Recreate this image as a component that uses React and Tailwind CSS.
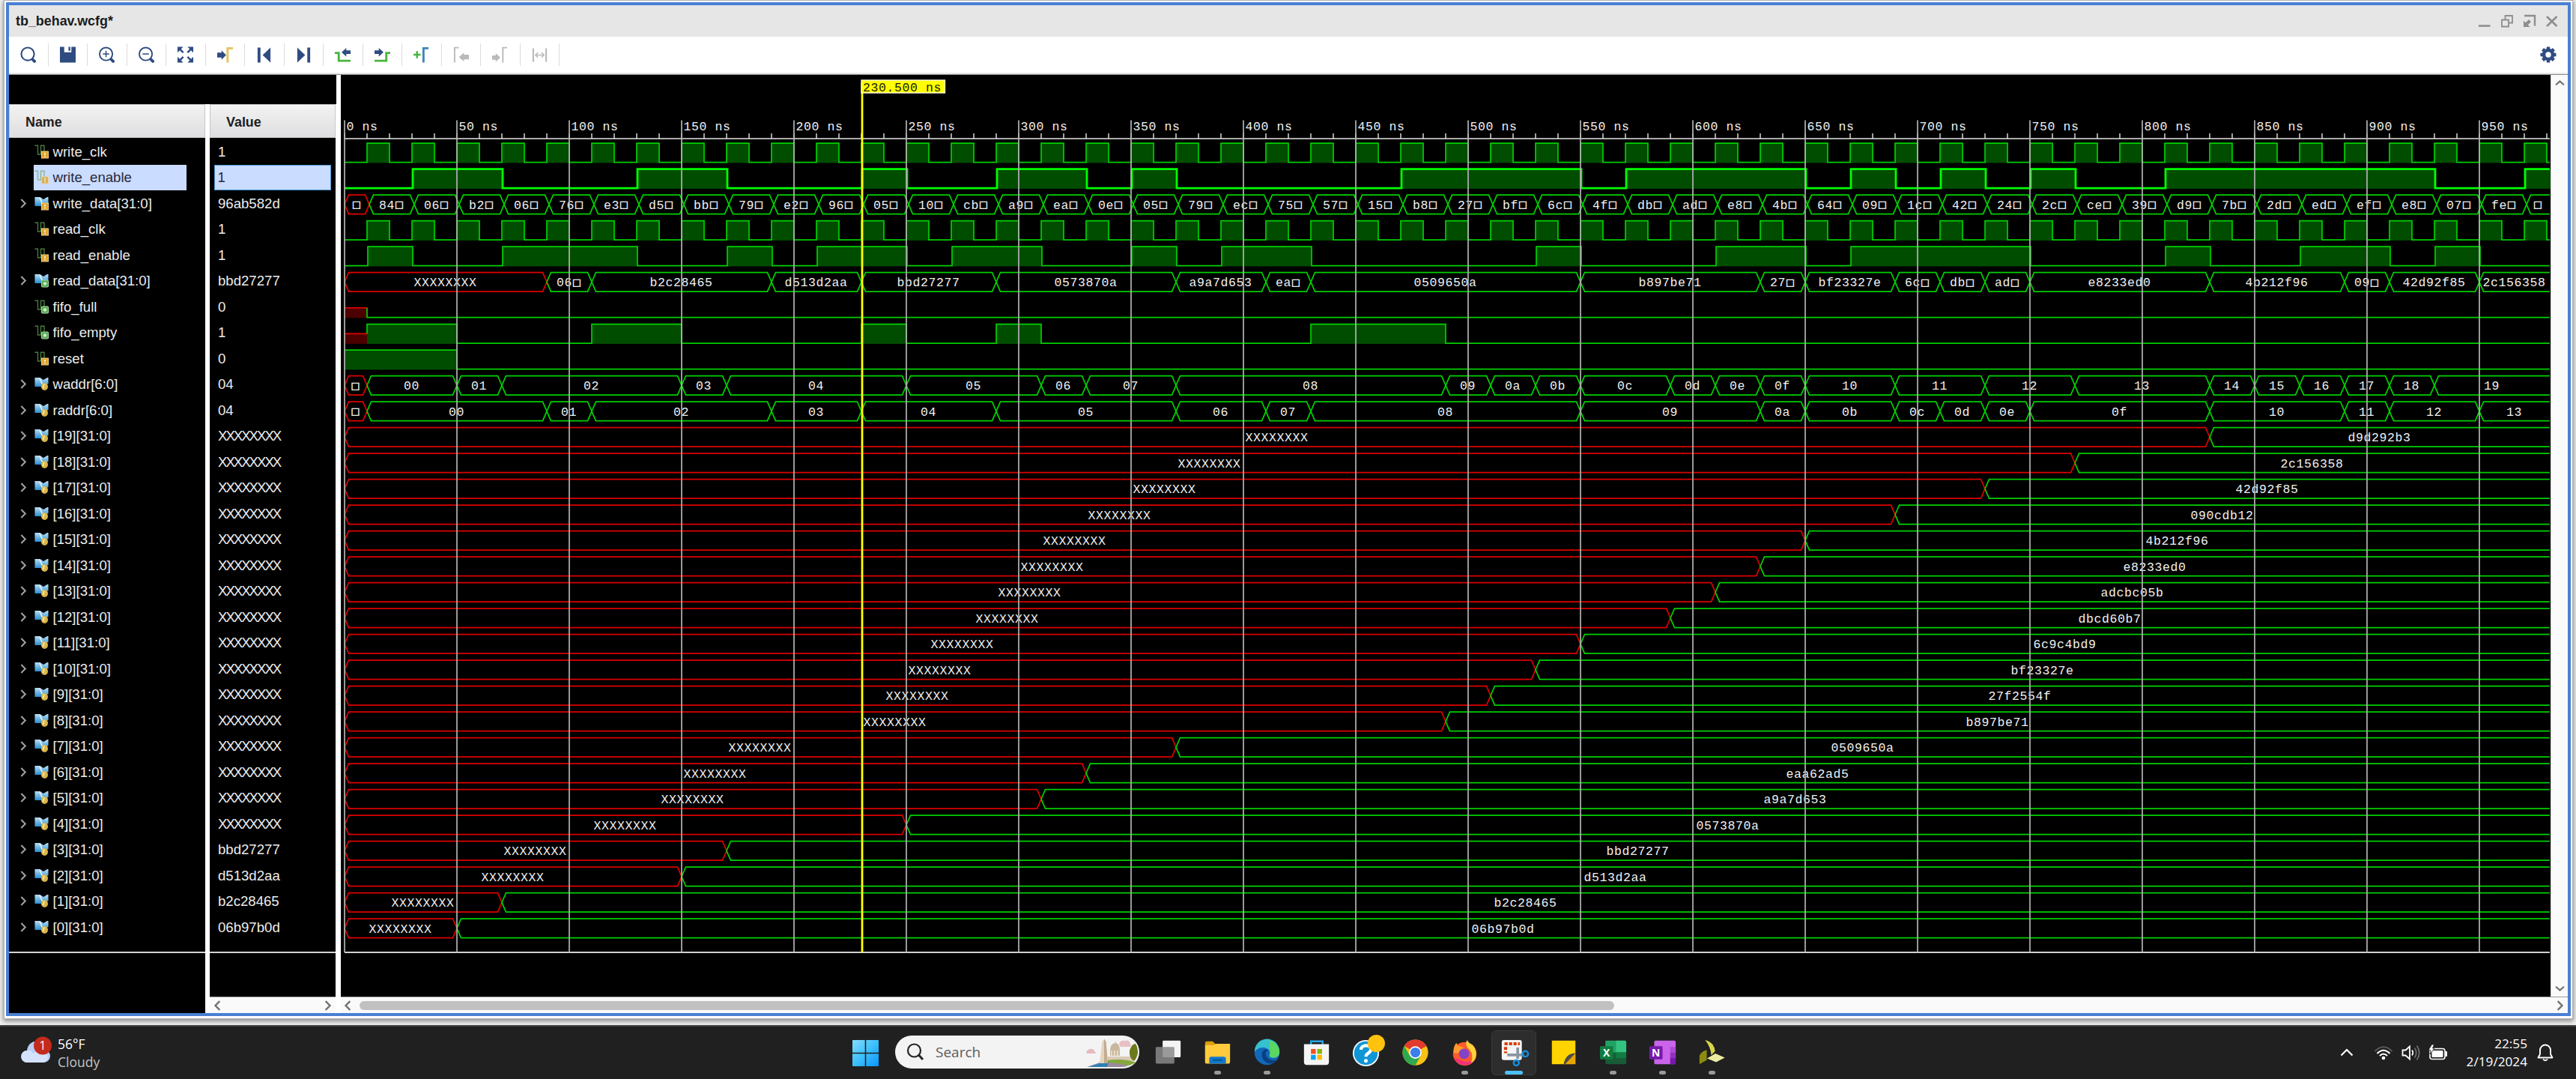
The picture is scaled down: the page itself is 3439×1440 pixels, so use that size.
import React from "react";

const END = 981.3;
const X = (t) => 460 + 3 * Math.min(t, END);
const rowTop = (i) => 191.2 + 34.5 * i;
const GREEN = "#00d000";
const RED = "#dc0000";

// Each bus is a list of [start time, label, unknown?].
const hex = (s) => s.split(" ").map((p) => p.split(":")).map(([t, v]) => [Number(t), v]);

const WRITE_DATA = [
  [0, "□", true],
  ..."84 06 b2 06 76 e3 d5 bb 79 e2 96 05 10 cb a9 ea 0e 05 79 ec 75 57 15 b8 27 bf 6c 4f db ad e8 4b 64 09 1c 42 24 2c ce 39 d9 7b 2d ed ef e8 07 fe"
    .split(" ")
    .map((v, k) => [11 + 20 * k, v + "□"]),
  [971, "□"],
];
const READ_DATA = [
  [0, "XXXXXXXX", true],
  ...hex(
    "90:06□ 110:b2c28465 190:d513d2aa 230:bbd27277 290:0573870a 370:a9a7d653 410:ea□ 430:0509650a 550:b897be71 630:27□ 650:bf23327e 690:6c□ 710:db□ 730:ad□ 750:e8233ed0 830:4b212f96 890:09□ 910:42d92f85 950:2c156358"
  ),
];
const WADDR = [
  [0, "□", true],
  ...hex(
    "10:00 50:01 70:02 150:03 170:04 250:05 310:06 330:07 370:08 490:09 510:0a 530:0b 550:0c 590:0d 610:0e 630:0f 650:10 690:11 730:12 770:13 830:14 850:15 870:16 890:17 910:18 930:19"
  ),
];
const RADDR = [
  [0, "□", true],
  ...hex(
    "10:00 90:01 110:02 190:03 230:04 290:05 370:06 410:07 430:08 550:09 630:0a 650:0b 690:0c 710:0d 730:0e 750:0f 830:10 890:11 910:12 950:13"
  ),
];

const CLK = Array.from({ length: 49 }, (_, k) => [10 + 20 * k, 20 + 20 * k]);

const MEM = [
  [19, 830, "d9d292b3"], [18, 770, "2c156358"], [17, 730, "42d92f85"], [16, 690, "090cdb12"],
  [15, 650, "4b212f96"], [14, 630, "e8233ed0"], [13, 610, "adcbc05b"], [12, 590, "dbcd60b7"],
  [11, 550, "6c9c4bd9"], [10, 530, "bf23327e"], [9, 510, "27f2554f"], [8, 490, "b897be71"],
  [7, 370, "0509650a"], [6, 330, "eaa62ad5"], [5, 310, "a9a7d653"], [4, 250, "0573870a"],
  [3, 170, "bbd27277"], [2, 150, "d513d2aa"], [1, 70, "b2c28465"], [0, 50, "06b97b0d"],
];

const SIGNALS = [
  { name: "write_clk", value: "1", kind: "bit", badge: "in", high: CLK },
  {
    name: "write_enable", value: "1", kind: "bit", badge: "in", selected: true, shift: 1,
    high: [[30, 70], [130, 170], [230, 250], [290, 330], [350, 370], [470, 550], [570, 650], [670, 690], [710, 730], [750, 770], [810, 930], [970, 990]],
  },
  { name: "write_data[31:0]", value: "96ab582d", kind: "bus", badge: "in", segs: WRITE_DATA },
  { name: "read_clk", value: "1", kind: "bit", badge: "in", high: CLK },
  {
    name: "read_enable", value: "1", kind: "bit", badge: "in", shift: 1,
    high: [[10, 30], [70, 130], [170, 190], [210, 250], [270, 310], [350, 370], [390, 430], [530, 550], [610, 650], [670, 750], [810, 830], [870, 910], [930, 950]],
  },
  { name: "read_data[31:0]", value: "bbd27277", kind: "bus", badge: "out", segs: READ_DATA },
  { name: "fifo_full", value: "0", kind: "bit", badge: "out", unknown: 10, high: [] },
  { name: "fifo_empty", value: "1", kind: "bit", badge: "out", unknown: 10, high: [[10, 50], [110, 150], [230, 250], [290, 310], [430, 490]] },
  { name: "reset", value: "0", kind: "bit", badge: "in", high: [[0, 50]] },
  { name: "waddr[6:0]", value: "04", kind: "bus", badge: "lock", segs: WADDR },
  { name: "raddr[6:0]", value: "04", kind: "bus", badge: "lock", segs: RADDR },
  ...MEM.map(([n, t, v]) => ({
    name: `[${n}][31:0]`,
    value: t < 230 ? v : "XXXXXXXX",
    kind: "bus",
    badge: "lock",
    segs: [[0, "XXXXXXXX", true], [t, v]],
  })),
];

function BitWave({ sig, i }) {
  const top = rowTop(i);
  const bot = top + 25.4;
  const mid = top + 12.6;
  const dx = sig.shift || 0;
  const start = sig.unknown || 0;
  let d = "";
  let cur = X(start);
  if (sig.unknown) {
    const firstHigh = sig.high.length && sig.high[0][0] === start;
    d += `M${cur} ${mid}V${firstHigh ? top : bot}`;
  } else d += `M${cur} ${sig.high[0] && sig.high[0][0] === 0 ? top : bot}`;
  sig.high.forEach(([a, b]) => {
    if (a > start) d += `H${X(a) + dx}V${top}`;
    d += b >= END ? `H${X(b)}` : `H${X(b) + dx}V${bot}`;
    cur = b;
  });
  if (cur < END || !sig.high.length) d += `H${X(END)}`;
  return (
    <g>
      {sig.unknown && (
        <>
          <rect x={X(0)} y={mid} width={30} height={bot - mid + 0.8} fill="#4d0000" />
          <path d={`M${X(0)} ${mid}H${X(10)}`} stroke={RED} strokeWidth="1.8" />
        </>
      )}
      {sig.high.map(([a, b]) => (
        <rect key={a} x={X(a) + dx} y={top} width={X(b) - X(a)} height={bot - top + 0.8} fill="#004d00" />
      ))}
      <path d={d} fill="none" stroke={sig.selected ? "#00ff00" : GREEN} strokeWidth={sig.selected ? 2.8 : 1.7} />
    </g>
  );
}

// Truncated labels end in a hollow box that stands for the missing digits.
function BusLabel({ label }) {
  if (!label.endsWith("□")) return label;
  return (
    <>
      {label.slice(0, -1)}
      <tspan className="font-['DejaVu_Sans']" fontSize="12.500" dy="-1.200" letterSpacing="0" stroke="#f0f0f0" strokeWidth=".5">□</tspan>
    </>
  );
}

function BusWave({ sig, i }) {
  const top = rowTop(i);
  const bot = top + 25.4;
  const mid = (top + bot) / 2;
  return (
    <g>
      {sig.segs.map(([a, label, unk], k) => {
        const last = k === sig.segs.length - 1;
        const x0 = X(a);
        const x1 = last ? X(END) : X(sig.segs[k + 1][0]);
        const s = 5.5;
        const d = last
          ? `M${x1} ${top}H${x0 + s}L${x0} ${mid}L${x0 + s} ${bot}H${x1}`
          : `M${x0} ${mid}L${x0 + s} ${top}H${x1 - s}L${x1} ${mid}L${x1 - s} ${bot}H${x0 + s}Z`;
        return (
          <g key={a}>
            <path d={d} fill="none" stroke={unk ? RED : GREEN} strokeWidth="1.7" />
            <text x={(x0 + x1) / 2 - 0.5} y={top + 18.4} textAnchor="middle" fill="#f0f0f0" fontSize="16.5" letterSpacing="0.6">
              <BusLabel label={label} />
            </text>
          </g>
        );
      })}
    </g>
  );
}

function Waves() {
  const majors = Array.from({ length: 20 }, (_, k) => 50 * k);
  const minors = Array.from({ length: 99 }, (_, k) => 10 * k);
  return (
    <svg width="2950" height="1230" viewBox="455 100 2950 1230" className="block bg-black font-['Liberation_Mono','DejaVu_Sans_Mono',monospace]">
      {SIGNALS.map((s, i) => (s.kind === "bit" ? <BitWave key={s.name} sig={s} i={i} /> : <BusWave key={s.name} sig={s} i={i} />))}
      <g stroke="#e4e4e4" strokeWidth="1.4">
        <path d="M460 185H3404" />
        {minors.map((t) => <path key={t} d={`M${X(t)} 178V185`} />)}
      </g>
      <path d="M460 1271H3404" stroke="#d0d0d0" strokeWidth="1.8" />
      {majors.map((t) => (
        <g key={t}>
          <path d={`M${X(t)} 160.500V1271`} stroke="#b4b4b4" strokeWidth="1.7" />
          <text x={X(t) + 2.5} y="174.300" fill="#f0f0f0" fontSize="16.5" letterSpacing="0.6">{t} ns</text>
        </g>
      ))}
      <path d="M1151 110V1271" stroke="#ffff00" strokeWidth="2.8" />
      <rect x="1150" y="107" width="111.500" height="17" fill="#ffff00" stroke="#fffff0" strokeWidth="1.3" />
      <text x="1152" y="121.600" fill="#202000" fontSize="16.5" letterSpacing="0.6">230.500 ns</text>
    </svg>
  );
}

function SignalIcon({ kind, badge, faded }) {
  return (
    <svg width="19" height="19" viewBox="0 0 19 19" className={faded ? "shrink-0 opacity-80" : "shrink-0"}>
      {kind === "bit" ? (
        <path d="M.5 1.200H4.500V13H9M8.500 13V1.200H13V9" fill="none" stroke={faded ? "#7fae7a" : "#4a7a3f"} strokeWidth="1.4" />
      ) : (
        <>
          <defs>
            <linearGradient id="busfill" x1="0" y1="0" x2="0" y2="1">
              <stop offset="0" stopColor="#b9def5" />
              <stop offset="1" stopColor="#2a8fd0" />
            </linearGradient>
          </defs>
          <path d="M.5 1H7.500L12 4L17 1H18.500V9L11 13H.5Z" fill="url(#busfill)" />
          <path d="M7 2L12 13" stroke="#e8f5ff" strokeWidth="1.6" />
        </>
      )}
      {badge === "in" && (
        <>
          <rect x="9.500" y="9" width="9" height="9" fill="#dfa32c" stroke="#f2d488" strokeWidth="1" />
          <path d="M14 11V13.500M14 14.800V16.200" stroke="#fff6da" strokeWidth="1.800" />
        </>
      )}
      {badge === "out" && (
        <>
          <rect x="9.500" y="9" width="9" height="9" rx="1" fill="#58a854" stroke="#a8d8a4" strokeWidth="1" />
          <circle cx="14" cy="13.500" r="2.300" fill="#c8ecc4" />
        </>
      )}
      {badge === "lock" && (
        <>
          <ellipse cx="13.500" cy="13" rx="4.500" ry="5" fill="#d9b64c" />
          <path d="M13 9.500L11.500 15" stroke="#fbeec0" strokeWidth="1.500" />
        </>
      )}
    </svg>
  );
}

const N = "#2f4c82";
const ICONS = [
  <g key="a" fill="none" stroke={N}><circle cx="10.500" cy="10" r="9" strokeWidth="2.200" /><path d="M16.500 17L21.300 21.500" strokeWidth="4" /></g>,
  <path key="b" fill={N} d="M0 0H6V7.500H16V0H22V22H0ZM12 0H14.500V5.500H12Z" />,
  <g key="c" fill="none" stroke={N}><circle cx="10" cy="10" r="9" strokeWidth="2" /><path d="M10 5.500V14.500M5.500 10H14.500" strokeWidth="1.600" /><path d="M16.500 17L21.300 21.500" strokeWidth="4" /></g>,
  <g key="d" fill="none" stroke={N}><circle cx="10" cy="10" r="9" strokeWidth="2" /><path d="M5.500 10H14.500" strokeWidth="1.600" /><path d="M16.500 17L21.300 21.500" strokeWidth="4" /></g>,
  <g key="e" fill={N} stroke={N}><path strokeWidth="2.600" d="M3 3L8 8M19 3L14 8M3 19L8 14M19 19L14 14" /><path stroke="none" d="M0 0H8L0 8ZM22 0V8L14 0ZM0 22V14L8 22ZM22 22H14L22 14Z" /></g>,
  <g key="f"><path fill={N} d="M0 8H6V5L12.500 11.500L6 18V15H0Z" /><path d="M14.500 22V2H22" fill="none" stroke="#e3c765" strokeWidth="3.200" /></g>,
  <path key="g" fill={N} d="M2 1H6V22H2ZM20 1V22L9 11.500Z" />,
  <path key="h" fill={N} d="M20 1H16V22H20ZM2 1V22L13 11.500Z" />,
  <g key="i"><path d="M0 8.500H5.500V19.500H22" fill="none" stroke="#49b53c" strokeWidth="3" /><path fill={N} d="M22 5H16V1.500L9.500 7.500L16 13.500V10H22Z" /></g>,
  <g key="j"><path d="M22 8.500H16.500V19.500H0" fill="none" stroke="#49b53c" strokeWidth="3" /><path fill={N} d="M0 5H6V1.500L12.500 7.500L6 13.500V10H0Z" /></g>,
  <g key="k" fill="none"><path d="M0 11H10M5 6V16" stroke="#49b53c" strokeWidth="2.600" /><path d="M14 22V2H21" stroke="#3a86b8" strokeWidth="3" /></g>,
  <g key="l" fill="#bababa"><path d="M2 22V1.200H8" fill="none" stroke="#bababa" strokeWidth="2" /><path d="M22 11H15V8L8 14.500L15 20.500V17.500H22Z" /></g>,
  <g key="m" fill="#bababa"><path d="M15 22V1.200H21" fill="none" stroke="#bababa" strokeWidth="2" /><path d="M0 12H5V9L11.500 15L5 21V18H0Z" /></g>,
  <g key="n" fill="none" stroke="#bababa"><path d="M2 2V21M20 2V21" strokeWidth="2.200" /><path d="M5 11.500H17M8.500 8L5 11.500L8.500 15M13.500 8L17 11.500L13.500 15" strokeWidth="1.600" /></g>,
];

function Chevron({ d, w = 12, h = 12, stroke = "#707070", sw = 2 }) {
  return (
    <svg width={w} height={h} viewBox="0 0 12 12" className="shrink-0">
      <path d={d} fill="none" stroke={stroke} strokeWidth={sw} />
    </svg>
  );
}
const RIGHT = "M4 1L9 6L4 11";
const LEFT = "M8 1L3 6L8 11";

function TitleBar() {
  return (
    <div className="flex h-[42px] items-center justify-between bg-[#e6e6e6] pl-[9px] pr-[13px]">
      <span className="pt-px text-[17.9px] font-bold text-[#1c1c1c]">tb_behav.wcfg*</span>
      <svg width="106" height="18" viewBox="0 0 106 18" fill="none" stroke="#8e8e8e" strokeWidth="1.800">
        <path d="M0 15.500H15.500" strokeWidth="2.600" />
        <path d="M35.500 7V2H45V11.500H40M31 7.500H40V16.500H31Z" />
        <path d="M61 2H75V15.500" strokeWidth="2.400" />
        <path d="M60 8.500V17H68.500L65.800 14.300L70 10L67 7L62.700 11.200Z" fill="#8e8e8e" stroke="none" />
        <path d="M91 3L104.500 16M104.500 3L91 16" strokeWidth="2.600" />
      </svg>
    </div>
  );
}

function Toolbar() {
  return (
    <div className="flex h-[48px] items-center justify-between bg-white pr-[15px]">
      <div className="flex h-full items-center">
        {ICONS.map((ic, k) => (
          <div key={k} className="flex h-[30px] w-[52.5px] items-center justify-center border-r-[1.5px] border-[#dcdcdc]">
            <svg width="21" height="22" viewBox="0 0 22 22">{ic}</svg>
          </div>
        ))}
      </div>
      <svg width="22" height="22" viewBox="0 0 22 22">
        <g stroke={N} strokeWidth="4.400">
          <path d="M11 .5V21.500M.5 11H21.500M3.600 3.600L18.400 18.400M18.400 3.600L3.600 18.400" />
        </g>
        <circle cx="11" cy="11" r="6" fill="#fff" stroke={N} strokeWidth="4.600" />
      </svg>
    </div>
  );
}

const HEAD = "flex h-[45px] items-center border border-[#c6c6c8] bg-linear-to-b from-[#f3f3f3] to-[#dedee0] pt-[3px] text-[17.9px] font-bold text-[#202020]";

function NamePane() {
  return (
    <div className="flex w-[262px] flex-col bg-black">
      <div className={HEAD + " mb-px pl-[21px]"}>Name</div>
      {SIGNALS.map((s) => (
        <div key={s.name} className="flex h-[34.5px] items-center pl-[12px]">
          <span className="flex w-[21px]">{s.kind === "bus" && <Chevron d={RIGHT} stroke="#a0a0a0" w={13} h={13} sw={1.9} />}</span>
          <div className={s.selected ? "flex h-full w-[204px] items-center gap-[5.5px] bg-[#cadcff] pl-px text-[#28283c]" : "flex h-full w-[204px] items-center gap-[5.5px] pl-px text-[#ececec]"}>
            <SignalIcon kind={s.kind} badge={s.badge} faded={s.selected} />
            <span className="pt-[2px] text-[18.6px] leading-none whitespace-nowrap">{s.name}</span>
          </div>
        </div>
      ))}
      <div className="mt-[15px] h-[2px] bg-[#d4d4d4]" />
    </div>
  );
}

function ValuePane() {
  return (
    <div className="flex w-[168px] flex-col bg-black">
      <div className={HEAD + " mb-px pl-[21px]"}>Value</div>
      {SIGNALS.map((s) => (
        <div key={s.name} className="flex h-[34.5px] px-[6px]">
          <div className={s.selected ? "flex w-full items-center border-[1.5px] border-[#4c97d2] bg-[#cadcff] pl-[3.500px] text-[#28283c]" : "flex w-full items-center pl-[5px] text-[#ececec]"}>
            <span className={s.value[0] === "X" ? "pt-[2px] text-[18.6px] leading-none tracking-[-2px]" : "pt-[2px] text-[18.6px] leading-none"}>{s.value}</span>
          </div>
        </div>
      ))}
      <div className="mt-[15px] h-[2px] bg-[#d4d4d4]" />
      <div className="mt-auto flex h-[22px] items-center justify-between border-t border-[#9a9a9a] bg-[#fafafa] px-[4px]">
        <Chevron d={LEFT} w={14} h={14} />
        <Chevron d={RIGHT} w={14} h={14} />
      </div>
    </div>
  );
}

function Panes() {
  return (
    <div className="flex h-[1252px] bg-white">
      <div className="flex w-[437px] flex-col">
        <div className="h-[39px] bg-black" />
        <div className="flex flex-1 gap-[6px]">
          <NamePane />
          <ValuePane />
        </div>
      </div>
      <div className="ml-[6px] flex flex-1 flex-col">
        <div className="flex h-[1230px]">
          <Waves />
          <div className="flex flex-1 flex-col items-center justify-between border-l border-[#d8d8d8] bg-[#fafafa] py-[4px]">
            <Chevron d="M1 8.500L6 4L11 8.500" w={13} h={13} />
            <Chevron d="M1 3.500L6 8L11 3.500" w={13} h={13} />
          </div>
        </div>
        <div className="flex h-[22px] items-center border-t border-[#9a9a9a] bg-[#fafafa] pr-[4px] pl-[3px]">
          <Chevron d={LEFT} w={14} h={14} />
          <div className="ml-[8px] h-[12px] w-[1675px] rounded-full bg-[#c1c1c1]" />
          <div className="ml-auto"><Chevron d={RIGHT} w={14} h={14} /></div>
        </div>
      </div>
    </div>
  );
}

const APPS = [
  { k: "task", art: (
    <><rect x="12" y="2" width="26" height="24" rx="1.500" fill="#f4f4f4" /><rect x="2" y="11" width="27" height="24" rx="1.500" fill="#8a8a8a" fillOpacity=".85" /></>
  ) },
  { k: "files", dot: true, art: (
    <><path d="M2 5Q2 3 4 3H13L17 7H36V34H2Z" fill="#dd9d0b" /><path d="M2 8.500H15L17 6.500H38V33Q38 35 36 35H4Q2 35 2 33Z" fill="#ffcb3d" /><path d="M8 35V28Q8 25 11 25H29Q32 25 32 28V35Z" fill="#0f78cc" /><path d="M13 30H27" stroke="#07508f" strokeWidth="2" /></>
  ) },
  { k: "edge", dot: true, art: (
    <><circle cx="20" cy="19" r="18" fill="#1268b8" /><path d="M2 18A18 18 0 0 1 38 17C39 25 32 28 26 26C21 25 25 22 24 18C23 12 10 8 2 18Z" fill="#35c1ce" /><path d="M24 2A18 18 0 0 1 38 18C38 25 31 28 26 26C21 25 26 21 24 16Z" fill="#5bd75f" /><path d="M16 15C9 20 13 34 25 35C30 35 34 32 36 29C30 32 19 30 18 21C18 18 20 17 22 16Q19 13 16 15Z" fill="#0b3f83" /></>
  ) },
  { k: "store", art: (
    <><path d="M12 8V3H29V8" fill="none" stroke="#29a9e8" strokeWidth="2.500" /><path d="M2 7H38V33Q38 37 34 37H6Q2 37 2 33Z" fill="#f5f5f5" /><path d="M12 14H19V21H12Z" fill="#f25022" /><path d="M21 14H28V21H21Z" fill="#7fba00" /><path d="M12 22.500H19V29.500H12Z" fill="#00a4ef" /><path d="M21 22.500H28V29.500H21Z" fill="#ffb900" /></>
  ) },
  { k: "help", art: (
    <><circle cx="20" cy="20" r="19" fill="#f4f8fb" /><circle cx="20" cy="20" r="17" fill="#0f96d6" /><path d="M13 15C13 7 28 7 27 15C27 20 20 20 20 25" fill="none" stroke="#fff" strokeWidth="4.500" /><circle cx="20" cy="31" r="2.700" fill="#fff" /><circle cx="35" cy="6" r="12.500" fill="#ffc20e" /></>
  ) },
  { k: "chrome", art: (
    <><circle cx="20" cy="19" r="18.500" fill="#fbc116" /><path d="M20 19L4 9.800A18.500 18.500 0 0 1 36 9.800Z" fill="#e33b2e" /><path d="M4 9.800A18.500 18.500 0 0 0 20 37.500L27.800 23.500L12 23.500Z" fill="#2da94f" /><circle cx="20" cy="19" r="9" fill="#fff" /><circle cx="20" cy="19" r="7.200" fill="#3b7ded" /></>
  ) },
  { k: "firefox", dot: true, art: (
    <><circle cx="20" cy="21" r="17" fill="#ff5a2c" /><path d="M4 26A17 17 0 0 0 36 26Q28 36 16 31Q8 28 4 26Z" fill="#f0307c" /><path d="M23 1Q26 6 32 9Q39 18 35 28Q33 32 29 34Q34 22 26 14Q20 9 23 1Z" fill="#ffd43b" /><path d="M4 20Q3 10 8 5Q9 9 13 10L20 13Q12 14 12 20Z" fill="#ff9a2e" /><circle cx="19" cy="21" r="7.500" fill="#8243c9" /></>
  ) },
  { k: "snip", active: true, art: (
    <><rect x="2" y="1" width="29" height="29" rx="3" fill="#f6f6f6" /><path d="M6 6.500H28M7.500 11V20" fill="none" stroke="#d83b01" strokeWidth="4.500" strokeDasharray="4.500 2" /><path d="M25 12V28M10 22.500H34" stroke="#8b97a0" strokeWidth="4" /><circle cx="36" cy="21" r="4" fill="none" stroke="#1490df" strokeWidth="2.600" /><circle cx="23" cy="34" r="3.800" fill="none" stroke="#1490df" strokeWidth="2.600" /></>
  ) },
  { k: "notes", art: (
    <><path d="M3 2H37V20L22 36H3Z" fill="#ffd400" /><path d="M37 20V36H20Q23 20 37 20Z" fill="#4a4a4a" /><path d="M22 36L37 20V36Z" fill="#e8a500" /></>
  ) },
  { k: "excel", dot: true, art: (
    <><rect x="9" y="2" width="30" height="34" rx="2" fill="#185c37" /><path d="M9 2H24V19H9Z" fill="#21a366" /><path d="M24 2H37Q39 2 39 4V19H24Z" fill="#33c481" /><path d="M24 19H39V27H24Z" fill="#107c41" /><rect x="1" y="10" width="19" height="19" rx="1.500" fill="#107c41" /><text x="10.500" y="25" textAnchor="middle" fontSize="15" fontWeight="700" fill="#fff">X</text></>
  ) },
  { k: "onenote", dot: true, art: (
    <><rect x="8" y="2" width="31" height="34" rx="2" fill="#ca64ea" /><path d="M31 11H39V19H31Z" fill="#ae4bd5" /><path d="M31 19H39V27H31Z" fill="#9332bf" /><path d="M31 27H39V36H31Z" fill="#7719aa" /><rect x="1" y="10" width="19" height="19" rx="1.500" fill="#7719aa" /><text x="10.500" y="25" textAnchor="middle" fontSize="15" fontWeight="700" fill="#fff">N</text></>
  ) },
  { k: "vivado", dot: true, art: (
    <><path d="M10 1Q23 4 24.500 17L19 23Q18 10 10 1Z" fill="#d6d64a" /><path d="M2 36V24Q4 18 12.500 15.500V30Z" fill="#8c8c10" /><path d="M13 27.500L25 20.500L38.500 26.500L26 33Z" fill="#ececa0" /></>
  ) },
];

function Taskbar() {
  return (
    <div className="flex h-[72px] justify-between border-t-2 border-[#444444] bg-[#202020] font-['Open_Sans','Noto_Sans',sans-serif]">
      <div className="flex w-[300px] items-center pl-[28px]">
        <svg width="46" height="42" viewBox="0 0 46 42" className="mb-[6px]">
          <path d="M8 37A8 8 0 0 1 8 21C9 13 15 8 22 9C29 10 31 15 31 20A8.500 8.500 0 0 1 30 37Z" fill="#b8cff6" />
          <path d="M8 37A8 8 0 0 1 9 21Q14 20 16 25Q25 18 36 28Q36 36 30 37Z" fill="#d4e2fb" />
          <circle cx="29" cy="14.500" r="12" fill="#c42b1c" />
          <text x="29" y="20" textAnchor="middle" fontSize="15.500" fill="#fff">1</text>
        </svg>
        <div className="ml-[3px] flex flex-col text-[17.5px] leading-[24.5px]">
          <span className="text-white">56°F</span>
          <span className="text-[#c4c4c4]">Cloudy</span>
        </div>
      </div>
      <div className="ml-[838px] flex flex-1 items-center">
        <svg width="35" height="35" viewBox="0 0 35 35">
          <defs><linearGradient id="win" x1="0" y1="0" x2="1" y2="1"><stop offset="0" stopColor="#84dcff" /><stop offset=".5" stopColor="#3cc0fc" /><stop offset="1" stopColor="#0a94ff" /></linearGradient></defs>
          <path fill="url(#win)" d="M0 1Q0 0 1 0H16.700V16.700H0ZM18.300 0H34Q35 0 35 1V16.700H18.300ZM0 18.300H16.700V35H1Q0 35 0 34ZM18.300 18.300H35V34Q35 35 34 35H18.300Z" />
        </svg>
        <div className="ml-[22px] flex h-[44px] w-[326px] items-center rounded-full bg-[#f3f3f3] pl-[15px] mb-[2px]">
          <svg width="24" height="24" viewBox="0 0 24 24" fill="none" stroke="#242424" strokeWidth="2.200"><circle cx="10.500" cy="10" r="8.500" /><path d="M16.500 16L22 22" strokeWidth="3" /></svg>
          <span className="ml-[15px] text-[19px] text-[#5c5c5c]">Search</span>
          <svg width="76" height="44" viewBox="0 0 76 44" className="ml-auto">
            <path d="M5 23Q6 19 10 18Q15 17 16 21Q19 23 17 24H7Z" fill="#e6b9bf" />
            <path d="M49 12Q50 6 56 7Q63 5 64 11Q66 14 63 15H51Z" fill="#e8bfc6" />
            <path d="M34 28H68V34H34Z" fill="#d9cab6" />
            <path d="M37 20Q37 11 43.500 10L44 7L44.800 10Q50 11 50 20V27H37Z" fill="#c9b89f" />
            <path d="M39 20V27M43 20V27M47 20V27" stroke="#efe4d2" strokeWidth="1.500" />
            <path d="M6 42L26 35H44L66 37Q60 42 52 42Z" fill="#9a8b9c" />
            <path d="M34 33Q55 30 72 36L62 40Q50 37 34 36Z" fill="#85a83c" />
            <path d="M8 42L30 35H35L33 42Z" fill="#2c7fb5" />
            <path d="M23 37L26.500 8L29 4.500L31.500 8L34 37Z" fill="#e3d4bd" />
            <path d="M29 4.500L31.500 8L34 37H29Z" fill="#c2ab90" />
            <path d="M63 20Q66 11 71 11Q74 16 74 23Q73 30 69 34Q62 30 63 20Z" fill="#6d7a1c" />
          </svg>
        </div>
        <div className="ml-[5px] flex">
          {APPS.map((a) => (
            <div key={a.k} className="flex w-[66px] justify-center">
              <div className={a.active ? "flex h-[60px] w-[60px] flex-col items-center rounded-[6px] border border-[#3a3a3a] bg-[#2d2d2d]" : "flex h-[60px] w-[60px] flex-col items-center border border-transparent"}>
                <svg width="37" height="37" viewBox="0 0 40 40" overflow="visible" className="mt-[11px]">{a.art}</svg>
                {a.active && <div className="mt-[5px] h-[5px] w-[24px] rounded-full bg-[#4cc2ff]" />}
                {a.dot && <div className="mt-[5px] h-[5px] w-[9px] rounded-full bg-[#9a9a9a]" />}
              </div>
            </div>
          ))}
        </div>
      </div>
      <div className="flex items-center pr-[30px]">
        <svg width="18" height="12" viewBox="0 0 18 12" fill="none" stroke="#fff" strokeWidth="2.200"><path d="M1.500 9.500L9 2L16.500 9.500" /></svg>
        <svg width="26" height="20" viewBox="0 0 26 20" fill="none" className="ml-[27px]">
          <path d="M1.500 8Q13 -3.500 24.500 8" stroke="#5a5a5a" strokeWidth="2" />
          <path d="M4.500 11Q13 2.500 21.500 11M8 14Q13 9 18 14" stroke="#fff" strokeWidth="2" />
          <circle cx="13" cy="17" r="2.300" fill="#fff" />
        </svg>
        <svg width="26" height="22" viewBox="0 0 26 22" fill="none" className="ml-[11px]">
          <path d="M1.500 7.500H5.500L11 2.500V19.500L5.500 14.500H1.500Z" stroke="#fff" strokeWidth="1.800" />
          <path d="M14 7.500Q16.500 11 14 14.500" stroke="#fff" strokeWidth="1.800" />
          <path d="M17.500 4.500Q22 11 17.500 17.500M20.500 1.500Q27 11 20.500 20.500" stroke="#6a6a6a" strokeWidth="1.800" />
        </svg>
        <svg width="26" height="22" viewBox="0 0 26 22" className="ml-[10px]">
          <rect x="2" y="5.500" width="20" height="14" rx="3" fill="none" stroke="#fff" strokeWidth="1.600" />
          <rect x="4.500" y="8" width="15" height="9" rx="1" fill="#fff" />
          <path d="M23 9.500H24.500V15.500H23Z" fill="#fff" stroke="#fff" />
          <path d="M4.500 0L0 7.500H3L2 13L8 5H5.500L7.500 0Z" fill="#fff" stroke="#202020" strokeWidth=".8" />
        </svg>
        <div className="ml-[22px] flex w-[84px] flex-col items-end text-[17.200px] leading-[24.500px] whitespace-nowrap text-white">
          <span>22:55</span>
          <span>2/19/2024</span>
        </div>
        <svg width="22" height="24" viewBox="0 0 22 24" fill="none" stroke="#fff" strokeWidth="1.900" className="ml-[13px]">
          <path d="M1.500 18.500L4 14V8.500A7 7 0 0 1 18 8.500V14L20.500 18.500Z" strokeLinejoin="round" />
          <path d="M8 20.500Q11 24 14 20.500" />
        </svg>
      </div>
    </div>
  );
}

export default function App() {
  return (
    <div className="flex h-[1440px] w-[3439px] flex-col overflow-hidden bg-[#f2f2f2] font-['Liberation_Sans',Arial,sans-serif]">
      <div className="h-[1368px] overflow-hidden pr-[4px] pl-[5px]">
        <div className="h-[1360px] border border-[#b0b0b0] bg-white px-[2px] pt-[2px] pb-[3px] shadow-[0_2px_6px_1px_#8c8c8c]">
          <div className="h-[1353px] border-4 border-[#4a7fd4]">
            <TitleBar />
            <Toolbar />
            <div className="h-[3px] border-b border-[#8a8a8a] bg-[#e8e8e8]" />
            <Panes />
          </div>
        </div>
      </div>
      <Taskbar />
    </div>
  );
}
